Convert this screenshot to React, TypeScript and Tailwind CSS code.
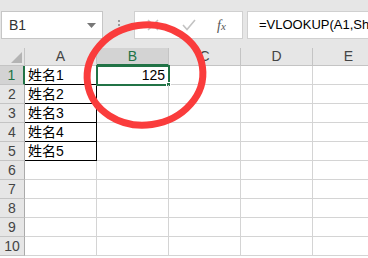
import React from "react";

const font = { fontFamily: '"Liberation Sans", "Noto Sans CJK SC", sans-serif' };

const cols = ["A", "B", "C", "D", "E"];
const names = ["姓名1", "姓名2", "姓名3", "姓名4", "姓名5"];

const HeaderCell = ({ label, selected }: { label: string; selected?: boolean }) => (
    <div
        className={`w-[72px] shrink-0 h-full flex items-center justify-center border-r border-[#c4c4c4] text-[14px] ${
            selected
                ? "bg-[#d3d3d3] text-[#217346] border-b-2 border-b-[#217346]"
                : "bg-[#e6e6e6] text-[#444] border-b border-b-[#c4c4c4]"
        }`}
    >
        {label}
    </div>
);

const Row = ({ n }: { n: number }) => {
    const selected = n === 1;
    const hasName = n <= 5;
    return (
        <div className="flex h-[19px]">
            <div
                className={`w-[25px] shrink-0 flex items-center justify-center text-[14px] border-b border-[#c4c4c4] ${
                    selected
                        ? "bg-[#d3d3d3] text-[#217346] border-r-2 border-r-[#217346]"
                        : "bg-[#e6e6e6] text-[#444] border-r border-r-[#ababab]"
                }`}
            >
                {n}
            </div>
            <div
                className={`w-[72px] shrink-0 flex items-center pl-[3px] text-[14px] text-black ${
                    hasName
                        ? "border-r border-b border-black"
                        : "border-r border-b border-[#d4d4d4]"
                }`}
            >
                {hasName ? names[n - 1] : ""}
            </div>
            <div className="w-[72px] shrink-0 relative flex items-center justify-end pr-[3px] border-r border-b border-[#d4d4d4] text-[14px] text-black">
                {selected && (
                    <>
                        125
                        <div className="absolute left-[-1px] top-[-1px] w-[74px] h-[21px] border-2 border-[#217346]" />
                        <div className="absolute right-[-3px] bottom-[-3px] w-[5px] h-[5px] bg-[#217346] border border-white" />
                    </>
                )}
            </div>
            <div className="w-[72px] shrink-0 border-r border-b border-[#d4d4d4]" />
            <div className="w-[72px] shrink-0 border-r border-b border-[#d4d4d4]" />
            <div className="flex-1 border-b border-[#d4d4d4]" />
        </div>
    );
};

export default function App() {
    return (
        <div className="relative w-[368px] h-[258px] overflow-hidden bg-white" style={font}>
            {/* toolbar */}
            <div className="h-[48px] bg-[#e6e6e6] flex items-start pt-[11px] pl-[1px]">
                <div className="w-[102px] h-[28px] bg-white border border-[#c6c6c6] flex items-center justify-between pl-[7px] pr-[6px]">
                    <span className="text-[14px] text-[#333]">B1</span>
                    <svg width="9" height="5" viewBox="0 0 9 5">
                        <path d="M0 0 H9 L4.5 5 Z" fill="#777" />
                    </svg>
                </div>
                <div className="w-[31px] h-[28px] flex flex-col items-center justify-center gap-[2px]">
                    <div className="w-[2px] h-[2px] bg-[#9a9a9a]" />
                    <div className="w-[2px] h-[2px] bg-[#9a9a9a]" />
                    <div className="w-[2px] h-[2px] bg-[#9a9a9a]" />
                </div>
                <div className="w-[109px] h-[28px] bg-white border border-[#d0d0d0] flex items-center pl-[12px]">
                    <svg width="12" height="12" viewBox="0 0 12 12">
                        <path d="M1 1 L11 11 M11 1 L1 11" stroke="#c3c3c3" strokeWidth="1.6" />
                    </svg>
                    <svg width="14" height="12" viewBox="0 0 14 12" className="ml-[23px]">
                        <path d="M1 6 L5 10.5 L13 1" stroke="#c3c3c3" strokeWidth="1.6" fill="none" />
                    </svg>
                    <span
                        className="ml-[21px] text-[14px] italic text-[#555]"
                        style={{ fontFamily: '"Liberation Serif", serif' }}
                    >
                        f<span className="text-[11px]">x</span>
                    </span>
                </div>
                <div className="ml-[4px] flex-1 h-[28px] bg-white border border-[#d0d0d0] border-r-0 flex items-center pl-[11px] overflow-hidden">
                    <span className="text-[13px] text-black whitespace-nowrap">=VLOOKUP(A1,She</span>
                </div>
            </div>

            {/* column headers */}
            <div className="flex h-[18px]">
                <div className="w-[25px] shrink-0 bg-[#e6e6e6] border-r border-b border-[#c4c4c4] flex items-end justify-end p-[2px]">
                    <svg width="11" height="11" viewBox="0 0 11 11">
                        <path d="M11 0 V11 H0 Z" fill="#b4b4b4" />
                    </svg>
                </div>
                {cols.map((c) => (
                    <HeaderCell key={c} label={c} selected={c === "B"} />
                ))}
            </div>

            {/* rows */}
            {Array.from({ length: 10 }, (_, i) => (
                <Row key={i} n={i + 1} />
            ))}

            {/* red annotation circle */}
            <svg className="absolute left-0 top-0 pointer-events-none" width="368" height="258">
                <ellipse
                    cx="145"
                    cy="75"
                    rx="58"
                    ry="50"
                    fill="none"
                    stroke="#fa3c3c"
                    strokeWidth="7"
                    transform="rotate(-8 145 75)"
                />
            </svg>
        </div>
    );
}
